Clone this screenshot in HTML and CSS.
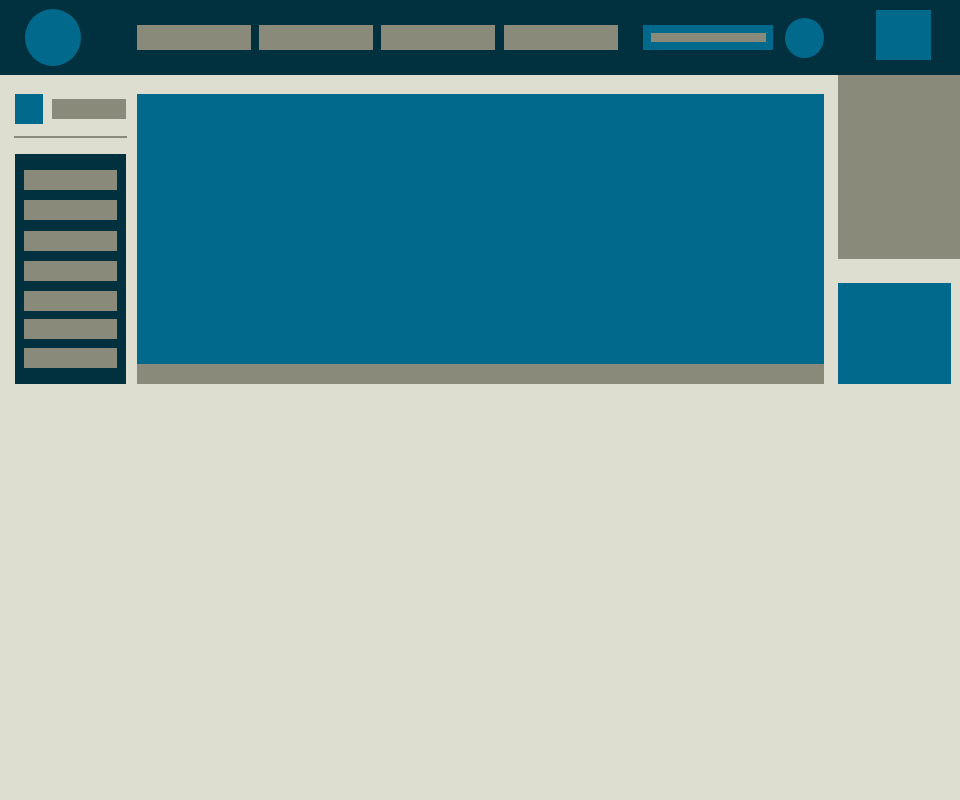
FILE: index.html
```html
<!DOCTYPE html>
<html lang="en">
<head>
    <meta charset="UTF-8">
    <meta name="viewport" content="width=device-width, initial-scale=1.0">
    <title>Layout</title>
    <link rel="stylesheet" href="styles.css">
</head>
<body>
    <!-- Top bar -->
    <header class="topbar">
        <div class="logo"></div>
        <nav class="nav">
            <div class="nav-item"></div>
            <div class="nav-item"></div>
            <div class="nav-item"></div>
            <div class="nav-item"></div>
        </nav>
        <div class="search"><div class="search-field"></div></div>
        <div class="avatar"></div>
        <div class="action"></div>
    </header>

    <div class="page">
        <!-- Sidebar -->
        <aside class="sidebar">
            <div class="side-head">
                <div class="side-icon"></div>
                <div class="side-title"></div>
            </div>
            <div class="divider"></div>
            <div class="menu">
                <div class="menu-item"></div>
                <div class="menu-item"></div>
                <div class="menu-item"></div>
                <div class="menu-item"></div>
                <div class="menu-item"></div>
                <div class="menu-item"></div>
                <div class="menu-item"></div>
            </div>
        </aside>

        <!-- Main content -->
        <main class="main">
            <div class="hero"></div>
            <div class="hero-caption"></div>
        </main>

        <!-- Right column -->
        <aside class="rail">
            <div class="rail-panel"></div>
            <div class="rail-card"></div>
        </aside>
    </div>
</body>
</html>
```

FILE: styles.css
```css
body {
    margin: 0;
    background: #dddecf;
    font-family: "Liberation Sans", Arial, sans-serif;
}

/* Top bar */
.topbar {
    height: 75px;
    background: #01303f;
    display: flex;
    align-items: center;
}

.logo {
    width: 56px;
    height: 57px;
    border-radius: 50%;
    background: #00698c;
    margin-left: 25px;
}

.nav {
    display: flex;
    gap: 8px;
    margin-left: 56px;
}

.nav-item {
    width: 114px;
    height: 25px;
    background: #898a7a;
}

.nav-item:last-child {
    margin-left: 1px;
}

.search {
    width: 130px;
    height: 25px;
    box-sizing: border-box;
    padding: 8px 7px 8px 8px;
    background: #00698c;
    margin-left: 25px;
}

.search-field {
    height: 9px;
    background: #898a7a;
}

.avatar {
    width: 39px;
    height: 40px;
    border-radius: 50%;
    background: #00698c;
    margin-left: 12px;
}

.action {
    width: 55px;
    height: 50px;
    background: #00698c;
    margin-left: 52px;
    align-self: flex-start;
    margin-top: 10px;
}

/* Page columns */
.page {
    display: flex;
    align-items: flex-start;
}

.sidebar {
    width: 113px;
    margin-left: 14px;
    padding-top: 19px;
}

.side-head {
    display: flex;
    align-items: center;
    gap: 9px;
    margin-left: 1px;
}

.side-icon {
    width: 28px;
    height: 30px;
    background: #00698c;
}

.side-title {
    width: 74px;
    height: 20px;
    background: #898a7a;
}

.divider {
    height: 2px;
    background: #898a7a;
    margin-top: 12px;
}

.menu {
    margin: 16px 1px 0;
    padding: 16px 9px;
    background: #01303f;
    display: flex;
    flex-direction: column;
    gap: 10px;
}

.menu-item {
    height: 20px;
    background: #898a7a;
}

/* uneven spacing in the list */
.menu-item:nth-child(3) { margin-top: 1px; }
.menu-item:nth-child(6) { margin-top: -2px; }
.menu-item:nth-child(7) { margin-top: -1px; }

.main {
    width: 687px;
    margin-left: 10px;
    padding-top: 19px;
}

.hero {
    height: 270px;
    background: #00698c;
}

.hero-caption {
    height: 20px;
    background: #898a7a;
}

.rail {
    flex: 1;
    margin-left: 14px;
}

.rail-panel {
    height: 184px;
    background: #898a7a;
}

.rail-card {
    width: 113px;
    height: 101px;
    margin-top: 24px;
    background: #00698c;
}
```
